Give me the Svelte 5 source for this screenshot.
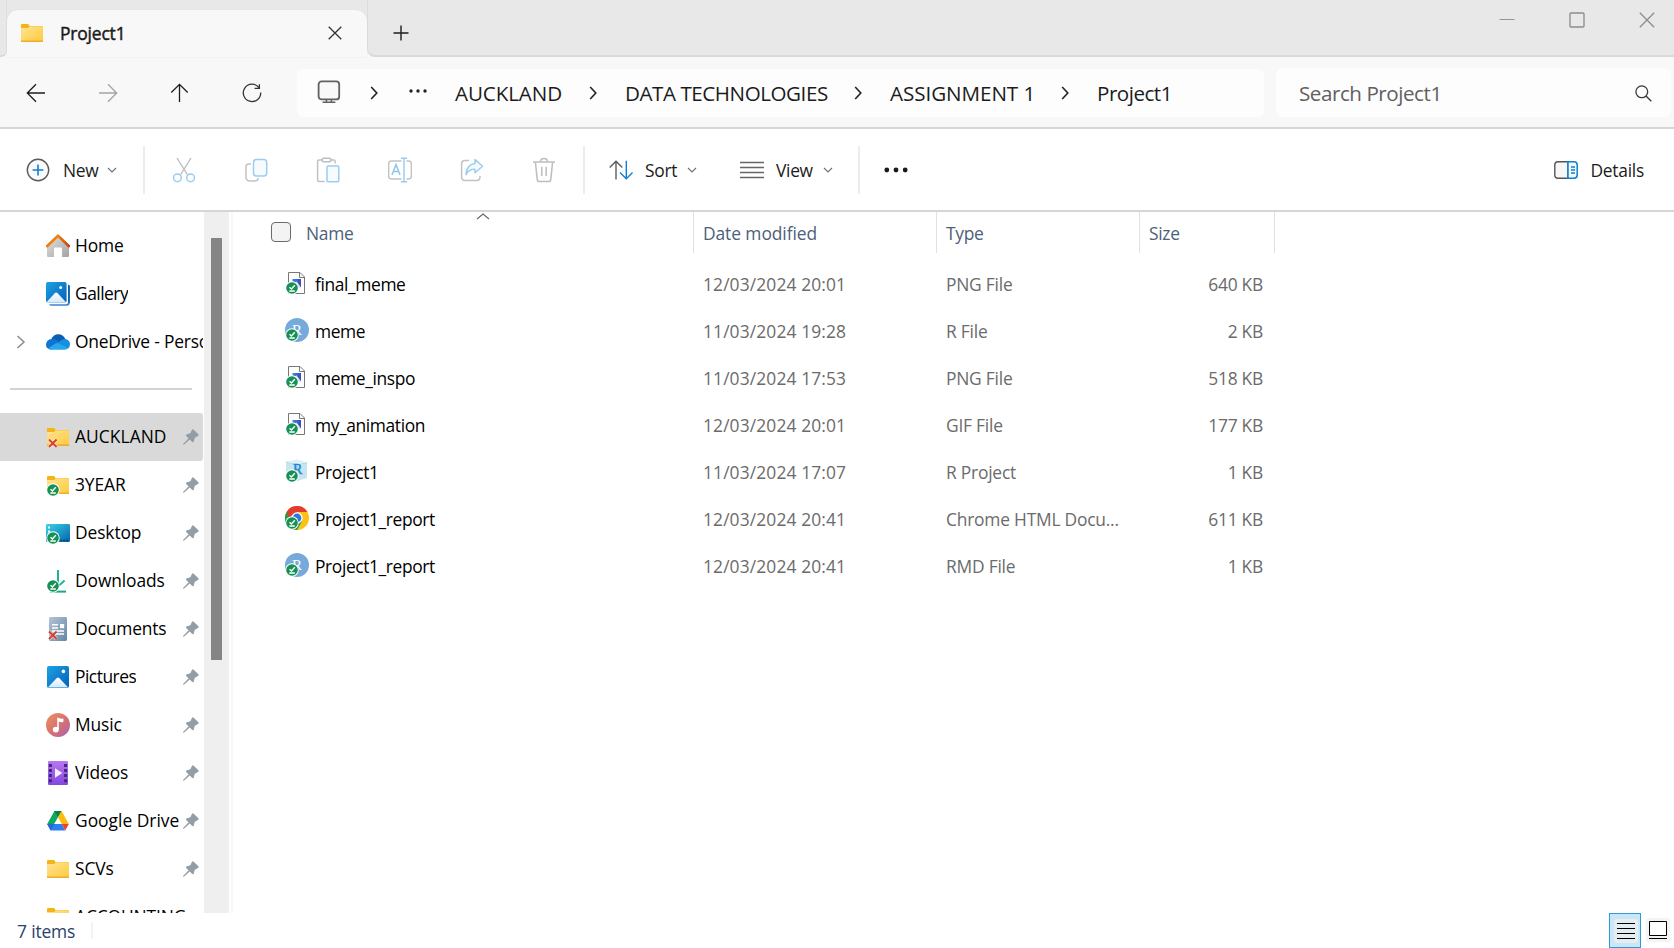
<script>
  const places = [
    { name: 'Home', icon: 'home' },
    { name: 'Gallery', icon: 'gallery', tracking: -0.5 },
    { name: 'OneDrive - Personal', icon: 'onedrive', expandable: true, tracking: -0.2 }
  ];

  const pinned = [
    { name: 'AUCKLAND', icon: 'folder', badge: 'error', selected: true, tracking: 0.06 },
    { name: '3YEAR', icon: 'folder', badge: 'synced' },
    { name: 'Desktop', icon: 'desktop', badge: 'synced' },
    { name: 'Downloads', icon: 'downloads', badge: 'synced' },
    { name: 'Documents', icon: 'documents', badge: 'error', tracking: -0.2 },
    { name: 'Pictures', icon: 'pictures', tracking: -0.5 },
    { name: 'Music', icon: 'music' },
    { name: 'Videos', icon: 'videos' },
    { name: 'Google Drive', icon: 'gdrive', tracking: 0 },
    { name: 'SCVs', icon: 'folder' },
    { name: 'ACCOUNTING', icon: 'folder', unpinned: true }
  ];

  const files = [
    { name: 'final_meme', date: '12/03/2024 20:01', type: 'PNG File', size: '640 KB', icon: 'image' },
    { name: 'meme', date: '11/03/2024 19:28', type: 'R File', size: '2 KB', icon: 'r' },
    { name: 'meme_inspo', date: '11/03/2024 17:53', type: 'PNG File', size: '518 KB', icon: 'image' },
    { name: 'my_animation', date: '12/03/2024 20:01', type: 'GIF File', size: '177 KB', icon: 'image' },
    { name: 'Project1', date: '11/03/2024 17:07', type: 'R Project', size: '1 KB', icon: 'rproj' },
    { name: 'Project1_report', date: '12/03/2024 20:41', type: 'Chrome HTML Docu...', size: '611 KB', icon: 'chrome' },
    { name: 'Project1_report', date: '12/03/2024 20:41', type: 'RMD File', size: '1 KB', icon: 'r' }
  ];
</script>

{#snippet folder()}
  <path d="M1 4.2Q1 3 2.2 3H7.6Q8.4 3 8.8 3.8L9.6 5.2H23V20.4H1Z" fill="#f5b416" />
  <path d="M1 7H8L9.6 5.6H23V20H1Z" fill="url(#gFolder)" />
  <path d="M1 19.6H23V20.8H1Z" fill="#eaa41b" />
{/snippet}

{#snippet badge(kind)}
  {#if kind === 'synced'}
    <circle cx="7" cy="17" r="6.7" fill="#fff" />
    <circle cx="7" cy="17" r="5.8" fill="#169154" />
    <path d="M4.5 16.3L6.4 18L9.8 14.2M4.3 20H9.8" fill="none" stroke="#fff" stroke-width="1.3" />
  {:else if kind === 'error'}
    <path d="M3 14.5L10.6 22M10.6 14.5L3 22" stroke="#fff" stroke-width="3.6" opacity=".6" />
    <path d="M3 14.5L10.6 22M10.6 14.5L3 22" stroke="#d64232" stroke-width="2" />
  {/if}
{/snippet}

{#snippet placeIcon(kind, mark)}
  <svg class="ic24" viewBox="0 0 24 24">
    {#if kind === 'home'}
      <path d="M1 11.5L12 2L23 11.5V21.8Q23 23 21.8 23H16V14.2Q16 13.4 15.2 13.4H8.8Q8 13.4 8 14.2V23H2.2Q1 23 1 21.8Z" fill="url(#gHouse)" />
      <path d="M1 12.2L12 1.7L23 12.2" fill="none" stroke="url(#gRoof)" stroke-width="2.6" stroke-linecap="round" stroke-linejoin="round" />
    {:else if kind === 'gallery'}
      <path d="M3 22.2Q3.6 23.8 5.2 23.8H20.6Q23.8 23.8 23.8 20.6V4.4Q23.8 3 22 2.4V20Q22 22.2 20 22.2Z" fill="#3e84c9" />
      <path d="M22 2.4Q23.8 3 23.8 4.4V20.6L22 21Z" fill="#0c62b3" />
      <rect x="0" y="0" width="20.6" height="20.6" rx="1.8" fill="url(#gPic)" />
      <path d="M.6 20L8.8 11.2Q10.2 9.8 11.6 11.2L19.8 20Q19.4 20.6 18.6 20.6H1.8Q1 20.6 .6 20Z" fill="url(#gSnow)" />
      <circle cx="14.6" cy="5.4" r="1.5" fill="#fff" />
    {:else if kind === 'onedrive'}
      <path d="M5 9.5Q7.4 4.2 12.4 4.2Q17 4.2 19.4 9L12 14Z" fill="#0a5fb4" />
      <path d="M5 19.6Q0 19.3 0 14.6Q.3 9.4 5.6 8.9Q8 8.4 10.5 10L18 14.5Z" fill="#0d74cf" />
      <path d="M10.8 13.6L16 9.8Q17.6 8.6 19.6 9Q23.8 10 24 14.2Q24 17 22 18.4Z" fill="#1490df" />
      <path d="M2 18.4L9.4 13.6Q11 12.6 12.8 13.6L22.2 18.3Q20.8 19.7 18.8 19.7H5.2Q3.2 19.6 2 18.4Z" fill="#28a8ea" />
    {:else if kind === 'folder'}
      {@render folder()}
    {:else if kind === 'desktop'}
      <rect x="0" y="3" width="24" height="18" rx="1.2" fill="url(#gDesk)" />
      <path d="M2 5.5H4V7.5H2ZM2 9.5H4V11.5H2Z" fill="#fff" />
      <path d="M14 19.5H23" stroke="#073f78" stroke-width="1.6" stroke-dasharray="2 1" />
    {:else if kind === 'downloads'}
      <path d="M12 1V17.5M6 11.6L12 17.5L18.6 11.6" fill="none" stroke="#17b59a" stroke-width="2" />
      <path d="M4 22.6H20" stroke="#17a88e" stroke-width="2" />
    {:else if kind === 'documents'}
      <rect x="3" y="0" width="18" height="24" rx="1.4" fill="url(#gDoc)" />
      <path d="M6 7.8H12M6 11H12M6 14H18M9 17H18" stroke="#fff" stroke-width="1.5" />
      <rect x="14" y="7" width="4.2" height="4.2" fill="#fff" />
    {:else if kind === 'pictures'}
      <rect x="1" y="1" width="22" height="22" rx="2" fill="url(#gPic)" />
      <path d="M2 22.2L10.6 13.2Q12 11.8 13.4 13.2L22 22.2Q21.6 22.6 20.8 22.6H3.2Q2.4 22.6 2 22.2Z" fill="url(#gSnow)" />
      <circle cx="17.4" cy="6.4" r="1.8" fill="#fff" />
    {:else if kind === 'music'}
      <circle cx="12" cy="12" r="12" fill="url(#gMusic)" />
      <ellipse cx="9.8" cy="16.6" rx="3" ry="2.9" fill="#fff" />
      <path d="M11.2 16.5V4.6Q14 6.2 17.4 5.6V9Q15 9.4 12.8 8.6V16.5Z" fill="#fff" />
    {:else if kind === 'videos'}
      <rect x="2" y="0" width="20" height="24" rx="1.2" fill="url(#gVideo)" />
      <path d="M4.4 2.9V22M19.6 2.9V22" stroke="#43257a" stroke-width="3" stroke-dasharray="3 2.1" />
      <path d="M9 7.2L16.4 12L9 16.8Z" fill="#f6f0ff" />
    {:else if kind === 'gdrive'}
      <path d="M8.4 2H15.6L12 8.2L4.8 20.8L1.2 15Z" fill="#0da960" />
      <path d="M8.4 2H15.6L12 8.2Z" fill="#118043" />
      <path d="M15.6 2L22.8 15H15.8L12 8.2Z" fill="#fcbc0b" />
      <path d="M8.3 15H15.8L19.3 21.6H4.8L1.2 15Z" fill="#2d7ff0" />
      <path d="M1.2 15H8.3L4.6 21.4Z" fill="#2869d8" />
      <path d="M15.8 15H22.8L19.3 21.6Z" fill="#ea4335" />
    {/if}
    {@render badge(mark)}
  </svg>
{/snippet}

{#snippet fileIcon(kind)}
  <svg class="ic24" viewBox="0 0 24 24">
    {#if kind === 'image'}
      <path d="M3.5 1.5H15L19.5 6V22.5H3.5Z" fill="#fdfdfd" stroke="#777" />
      <path d="M14.5 1.5V6.5H19.5" fill="none" stroke="#777" />
      <path d="M7.5 8H16V16.5L11.5 10.5L7.5 13Z" fill="url(#gThumb)" />
      <path d="M8 13L11.5 10.8L15.6 16.5H12Z" fill="#b9dcf8" />
    {:else if kind === 'r'}
      <circle cx="12" cy="12" r="12" fill="#75aadb" />
      <text x="7" y="17" font-family="Liberation Serif, serif" font-size="15" fill="#fff">R</text>
    {:else if kind === 'rproj'}
      <path d="M1 3L12 .6L22 3.6V19L12 22L1 19Z" fill="#c5e5ef" />
      <path d="M1 3L12 5.4L22 3.6M12 5.4V22" fill="none" stroke="#9fcfe0" />
      <path d="M1 3L12 .6L22 3.6L12 5.4Z" fill="#e0f2f7" />
      <text x="8" y="14.8" font-family="Liberation Serif, serif" font-size="14" fill="#1b83d8" stroke="#1b83d8" stroke-width=".4">R</text>
    {:else}
      <circle cx="12" cy="12" r="12" fill="#fbc116" />
      <path d="M12 12L1.6 6A12 12 0 0 0 12 24L17.2 15Z" fill="#279847" />
      <path d="M1.6 6A12 12 0 0 1 22.4 6H12L6.8 15Z" fill="#e33b2e" />
      <circle cx="12" cy="12" r="5.7" fill="#fff" />
      <circle cx="12" cy="12" r="4.4" fill="#2a78e4" />
    {/if}
    {@render badge('synced')}
  </svg>
{/snippet}

{#snippet crumbArrow()}
  <svg width="8" height="14" viewBox="0 0 8 14"><path d="M1.2 1L6.8 7L1.2 13" fill="none" stroke="#222" stroke-width="1.6" /></svg>
{/snippet}

{#snippet caret()}
  <svg class="caret" width="10" height="6" viewBox="0 0 10 6"><path d="M1 1L5 5L9 1" fill="none" stroke="#707070" stroke-width="1.1" /></svg>
{/snippet}

<svg class="defs" width="0" height="0">
  <defs>
    <linearGradient id="gFolder" x1="0" y1="0" x2="1" y2="1"><stop offset="0" stop-color="#ffe394" /><stop offset="1" stop-color="#ffcb3d" /></linearGradient>
    <linearGradient id="gHouse" x1="0" y1="0" x2="1" y2="1"><stop offset="0" stop-color="#e2e2e2" /><stop offset="1" stop-color="#a3a3a3" /></linearGradient>
    <linearGradient id="gRoof"><stop offset="0" stop-color="#ee7d10" /><stop offset=".5" stop-color="#f0820d" /><stop offset="1" stop-color="#cc3f0c" /></linearGradient>
    <linearGradient id="gPic" x1="0" y1="0" x2="1" y2="1"><stop offset="0" stop-color="#1da1e6" /><stop offset="1" stop-color="#0560b6" /></linearGradient>
    <linearGradient id="gSnow" x1="0" y1="0" x2="0" y2="1"><stop offset="0" stop-color="#fff" /><stop offset="1" stop-color="#d2e9fb" /></linearGradient>
    <linearGradient id="gDesk" x1="0" y1="0" x2="1" y2="1"><stop offset="0" stop-color="#35d5e8" /><stop offset="1" stop-color="#0762ad" /></linearGradient>
    <linearGradient id="gDoc" x1="0" y1="0" x2="1" y2="1"><stop offset="0" stop-color="#b3c5d7" /><stop offset="1" stop-color="#6585a5" /></linearGradient>
    <linearGradient id="gMusic" x1="0" y1="0" x2="1" y2="1"><stop offset="0" stop-color="#f0915c" /><stop offset=".55" stop-color="#d66f72" /><stop offset="1" stop-color="#a763b8" /></linearGradient>
    <linearGradient id="gVideo" x1="0" y1="0" x2="0" y2="1"><stop offset="0" stop-color="#b678ee" /><stop offset="1" stop-color="#8347dd" /></linearGradient>
    <linearGradient id="gThumb"><stop offset="0" stop-color="#3d8be0" /><stop offset="1" stop-color="#4643b5" /></linearGradient>
  </defs>
</svg>

<div class="window">
  <header class="tabs">
    <div class="lead"></div>
    <div class="tab">
      <svg class="ic24" viewBox="0 0 24 24">{@render folder()}</svg>
      <span class="tab-title">Project1</span>
      <svg class="tab-close" width="14" height="14" viewBox="0 0 14 14"><path d="M.7.7L13.3 13.3M13.3.7L.7 13.3" stroke="#333" stroke-width="1.3" /></svg>
    </div>
    <div class="strip">
      <svg class="plus" width="16" height="16" viewBox="0 0 16 16"><path d="M8 .5V15.5M.5 8H15.5" stroke="#1c1c1c" stroke-width="1.4" /></svg>
      <div class="controls">
        <svg width="16" height="16" viewBox="0 0 16 16"><path d="M.5 7.5H15.5" stroke="#969696" /></svg>
        <svg width="16" height="16" viewBox="0 0 16 16"><rect x="1" y="1" width="14" height="14" rx="1" fill="none" stroke="#8c8c8c" stroke-width="1.3" /></svg>
        <svg width="16" height="16" viewBox="0 0 16 16"><path d="M.8.8L15.2 15.2M15.2.8L.8 15.2" stroke="#8c8c8c" stroke-width="1.3" /></svg>
      </div>
    </div>
  </header>

  <nav class="navbar">
    <div class="history">
      <svg width="20" height="20" viewBox="0 0 20 20"><path d="M19 10H1.6M10 1.3L1.3 10L10 18.7" fill="none" stroke="#1c1c1c" stroke-width="1.3" /></svg>
      <svg width="20" height="20" viewBox="0 0 20 20"><path d="M1 10H18.4M10 1.3L18.7 10L10 18.7" fill="none" stroke="#a3a3a3" stroke-width="1.3" /></svg>
      <svg width="20" height="20" viewBox="0 0 20 20"><path d="M9.5 19V1.6M1.3 9.5L9.5 1.3L17.7 9.5" fill="none" stroke="#1c1c1c" stroke-width="1.3" /></svg>
      <svg width="20" height="20" viewBox="0 0 20 20"><path d="M16.8 4.4A8.7 8.7 0 1 0 18.7 9.5M17.4 1.2V5.4H12.6" fill="none" stroke="#333" stroke-width="1.3" /></svg>
    </div>
    <div class="address">
      <svg width="24" height="24" viewBox="0 0 24 24"><rect x="1.6" y="1.4" width="20.6" height="18" rx="3" fill="#f8f8f8" stroke="#616161" stroke-width="1.8" /><path d="M9.4 19.5V22M14.4 19.5V22M5.5 22.3H18.4" stroke="#616161" stroke-width="1.5" /></svg>
      {@render crumbArrow()}
      <svg class="more" width="18" height="4" viewBox="0 0 18 4"><circle cx="2" cy="2" r="1.7" fill="#222" /><circle cx="9" cy="2" r="1.7" fill="#222" /><circle cx="16" cy="2" r="1.7" fill="#222" /></svg>
      <span class="c1">AUCKLAND</span>
      {@render crumbArrow()}
      <span class="c2">DATA TECHNOLOGIES</span>
      {@render crumbArrow()}
      <span class="c3">ASSIGNMENT 1</span>
      {@render crumbArrow()}
      <span>Project1</span>
    </div>
    <div class="search">
      <span>Search Project1</span>
      <svg width="17" height="17" viewBox="0 0 17 17"><circle cx="6.8" cy="6.8" r="5.9" fill="none" stroke="#3a3a3a" stroke-width="1.3" /><path d="M11 11L16.3 16.3" stroke="#3a3a3a" stroke-width="1.4" /></svg>
    </div>
  </nav>

  <div class="toolbar">
    <div class="cmd new">
      <svg width="24" height="24" viewBox="0 0 24 24"><circle cx="12" cy="12" r="10.7" fill="#fafafa" stroke="#5a5a5a" stroke-width="1.4" /><path d="M12 6.6V17.4M6.6 12H17.4" stroke="#0f7fd6" stroke-width="1.6" /></svg>
      <span>New</span>
      {@render caret()}
    </div>
    <div class="sep"></div>
    <div class="actions">
      <svg viewBox="0 0 24 26"><path d="M5 1L15.6 18M19 1L8.4 18" stroke="#bdbdbd" stroke-width="1.4" /><circle cx="5.4" cy="20.8" r="3.9" fill="none" stroke="#9bcdf1" stroke-width="1.5" /><circle cx="18.6" cy="20.8" r="3.9" fill="none" stroke="#9bcdf1" stroke-width="1.5" /></svg>
      <svg viewBox="0 0 24 26"><path d="M7 7H5Q2 7 2 10V20Q2 24 6 24H11Q14 24 14 21" fill="none" stroke="#c2c2c2" stroke-width="1.5" /><rect x="9.5" y="2.4" width="13.2" height="16.6" rx="3" fill="#f7fbff" stroke="#9bcdf1" stroke-width="1.5" /></svg>
      <svg viewBox="0 0 24 26"><path d="M6 3H3Q1.6 3 1.6 4.4V23Q1.6 24.6 3 24.6H8.6M15 3H18Q19.2 3 19.2 4.4V6.4" fill="none" stroke="#c2c2c2" stroke-width="1.5" /><rect x="6" y="1.2" width="9" height="3.6" rx="1.8" fill="#fff" stroke="#bdbdbd" stroke-width="1.4" /><rect x="11" y="9" width="11.8" height="15.8" rx="1.2" fill="#f7fbff" stroke="#9bcdf1" stroke-width="1.5" /></svg>
      <svg viewBox="0 0 24 26"><path d="M13.6 4H3.6Q.6 4 .6 7V19Q.6 22 3.6 22H13.6M18.5 4H20.4Q23.4 4 23.4 7V19Q23.4 22 20.4 22H18.5" fill="none" stroke="#c2c2c2" stroke-width="1.5" /><path d="M12.8 1.2H19.2M16 1.2V24.8M12.8 24.8H19.2" fill="none" stroke="#9bcdf1" stroke-width="1.5" /><path d="M4 18L8 7.5L12 18M5.3 14.6H10.7" fill="none" stroke="#8dc4ed" stroke-width="1.5" /></svg>
      <svg viewBox="0 0 24 26"><path d="M9 3.4H5Q1.6 3.4 1.6 6.8V20Q1.6 23.4 5 23.4H16.6Q20 23.4 20 20V19" fill="none" stroke="#c2c2c2" stroke-width="1.5" /><path d="M15 2.6L22.6 9.2L15 15.8V12.2Q9 11.6 6 17.6Q6.4 7.4 15 6.4Z" fill="#f7fbff" stroke="#9bcdf1" stroke-width="1.5" stroke-linejoin="round" /></svg>
      <svg viewBox="0 0 24 26"><path d="M1 5H23M8.4 4.8Q8.6 1.4 12 1.4Q15.4 1.4 15.6 4.8M3.4 5L5.2 22.4Q5.4 24.6 7.6 24.6H16.4Q18.6 24.6 18.8 22.4L20.6 5M9.8 10V19M14.2 10V19" fill="none" stroke="#bdbdbd" stroke-width="1.5" /></svg>
    </div>
    <div class="sep second"></div>
    <div class="cmd sort">
      <svg width="24" height="20" viewBox="0 0 24 20"><path d="M7 19.5V1.5M.7 7.5L7 1.2L13.3 7.5" fill="none" stroke="#5c5c5c" stroke-width="1.4" /><path d="M17.3.8V18.5M11 12.5L17.3 18.8L23.6 12.5" fill="none" stroke="#0f7fd6" stroke-width="1.4" /></svg>
      <span>Sort</span>
      {@render caret()}
    </div>
    <div class="cmd view">
      <svg width="24" height="18" viewBox="0 0 24 18"><path d="M0 1.5H24M0 6.5H24M0 11.5H24M0 16.5H24" stroke="#666" stroke-width="1.5" /></svg>
      <span>View</span>
      {@render caret()}
    </div>
    <div class="sep third"></div>
    <svg class="dots" width="24" height="6" viewBox="0 0 24 6"><circle cx="2.8" cy="3" r="2.4" fill="#1a1a1a" /><circle cx="12" cy="3" r="2.4" fill="#1a1a1a" /><circle cx="21.2" cy="3" r="2.4" fill="#1a1a1a" /></svg>
    <div class="cmd details">
      <svg width="24" height="18" viewBox="0 0 24 18"><path d="M14 .8H4Q.8.8.8 4V14Q.8 17.2 4 17.2H14Z" fill="#f7f7f7" stroke="#555" stroke-width="1.4" /><path d="M14 .8H20Q23.2.8 23.2 4V14Q23.2 17.2 20 17.2H14Z" fill="#f2faff" stroke="#0f7fd6" stroke-width="1.5" /><path d="M17 6H21M17 9H21M17 12H21" stroke="#0f7fd6" stroke-width="1.3" /></svg>
      <span>Details</span>
    </div>
  </div>

  <main class="body">
    <aside class="tree">
      {#each places as p}
        <div class="node">
          <span class="expander">
            {#if p.expandable}
              <svg width="9" height="14" viewBox="0 0 9 14"><path d="M.5 1L7 7L.5 13" fill="none" stroke="#8a8a8a" stroke-width="1.5" /></svg>
            {/if}
          </span>
          {@render placeIcon(p.icon)}
          <span class="label" style:letter-spacing="{p.tracking ?? -0.1}px">{p.name}</span>
        </div>
      {/each}
      <div class="rule"></div>
      {#each pinned as p}
        <div class="node" class:selected={p.selected}>
          <span class="expander"></span>
          {@render placeIcon(p.icon, p.badge)}
          <span class="label" style:letter-spacing="{p.tracking ?? -0.1}px">{p.name}</span>
          {#if !p.unpinned}
            <svg class="pin" width="16" height="16" viewBox="0 0 16 16"><path d="M9.2.4Q10 0 10.7.7L15.4 5.3Q16 6 15.3 6.7L11.8 8.7L10.8 12.6Q10.2 13.6 9.3 12.9L6.7 10.4L1.2 15.6L0 15.9L.4 14.8L5.6 9.3L3.2 6.9Q2.4 6 3.4 5.4L7.3 4.3Z" fill="#929da5" /></svg>
          {/if}
        </div>
      {/each}
    </aside>
    <div class="scroll"><div class="thumb"></div></div>
    <section class="list">
      <div class="row head">
        <div class="cell name">
          <span class="check"></span>
          <span>Name</span>
          <svg class="asc" width="14" height="7" viewBox="0 0 14 7"><path d="M1 6L7 1L13 6" fill="none" stroke="#666" stroke-width="1.1" /></svg>
        </div>
        <div class="cell modified">Date modified</div>
        <div class="cell">Type</div>
        <div class="cell">Size</div>
      </div>
      {#each files as f}
        <div class="row">
          <div class="cell name">{@render fileIcon(f.icon)}<span>{f.name}</span></div>
          <div class="cell date">{f.date}</div>
          <div class="cell kind">{f.type}</div>
          <div class="cell size">{f.size}</div>
        </div>
      {/each}
    </section>
  </main>

  <footer class="status">
    <span class="count">7 items</span>
    <div class="tick"></div>
    <div class="modes">
      <div class="mode on"><svg width="24" height="24" viewBox="0 0 24 24"><rect width="24" height="24" rx="3" fill="#e4edf1" /><path d="M3 4.5H21M3 9.5H21M3 14.5H21M3 19.5H21" stroke="#000" /></svg></div>
      <div class="mode"><svg width="24" height="24" viewBox="0 0 24 24"><rect width="24" height="24" rx="3" fill="#f4f4f4" /><path d="M3.5 3.5H20.5V17.5H3.5ZM3 20.5H21" fill="#fff" stroke="#000" /></svg></div>
    </div>
  </footer>
</div>

<style>
  :global(body) { margin: 0; overflow: hidden; }
  .defs { display: block; height: 0; }
  .window {
    width: 1674px; height: 948px; display: flex; flex-direction: column; overflow: hidden;
    background: #fff; color: #1b1b1b; font: 17.4px/24px "Open Sans", "Noto Sans", sans-serif; letter-spacing: -0.3px;
    white-space: nowrap;
  }
  svg { display: block; flex: none; }
  .ic24 { width: 24px; height: 24px; }

  .tabs { height: 57px; display: flex; background: #f8f8f8; flex: none; }
  .lead { width: 7px; box-sizing: border-box; background: #e8e8e8; border-bottom: 2px solid #d9d9d9; border-right: 1px solid #dedede; border-radius: 0 0 6px 0; }
  .tab { width: 360px; display: flex; align-items: center; padding: 10px 24px 0 13px; box-sizing: border-box; background: linear-gradient(#e8e8e8 24px, #f8f8f8 24px); position: relative; z-index: 0; }
  .tab::before { content: ""; position: absolute; z-index: -1; inset: 10px 0 0; background: #f8f8f8; border-radius: 11px 11px 0 0; box-shadow: 0 0 1px #ccc; }
  .tab .ic24 { margin-top: -2px; }
  .tab-title { margin: -1px 0 0 16px; -webkit-text-stroke: .45px #1b1b1b; letter-spacing: -0.15px; }
  .tab-close { margin: -2px 1px 0 auto; }
  .strip { flex: 1; display: flex; justify-content: space-between; background: #e8e8e8; border-bottom: 2px solid #d9d9d9; border-left: 1px solid #dcdcdc; border-radius: 0 0 0 8px; box-sizing: border-box; }
  .plus { margin: 25px 0 0 25px; }
  .controls { display: flex; gap: 54px; padding: 12px 19px 0 0; }

  .navbar { height: 70px; flex: none; display: flex; background: #f8f8f8; border-bottom: 2px solid #d6d6d6; }
  .history { width: 297px; box-sizing: border-box; padding: 26px 0 0 26px; display: flex; gap: 52px; }
  .address { width: 967px; height: 48px; margin-top: 12px; box-sizing: border-box; padding: 0 0 0 20px; border-radius: 7px; background: #fdfdfd; display: grid; grid-template-columns: 53px 39px 46px 134px 36px 229px 36px 171px 36px auto; align-items: center; font-size: 20.6px; letter-spacing: -0.5px; }
  .c1 { letter-spacing: -0.1px; }
  .c2 { letter-spacing: -0.45px; }
  .c3 { letter-spacing: -0.05px; }
  .more { margin-top: -4px; }
  .address > svg:first-child { margin-top: -2px; }
  .search { width: 395px; height: 49px; margin: 11px 0 0 12px; box-sizing: border-box; padding: 0 19px 0 23px; border-radius: 7px; background: #fdfdfd; display: flex; align-items: center; justify-content: space-between; font-size: 20.6px; letter-spacing: -0.45px; color: #606060; }
  .search svg { margin-top: 2px; }

  .toolbar { height: 81px; flex: none; display: flex; align-items: center; border-bottom: 2px solid #d6d6d6; }
  .cmd { display: flex; align-items: center; }
  .cmd span { margin-top: 1px; }
  .caret { margin-left: -2px; margin-top: 1px; }
  .new { width: 92px; padding-left: 26px; gap: 13px; }
  .new .caret { margin-left: -4px; }
  .sep { width: 2px; height: 48px; margin-left: 25px; background: #ececec; }
  .actions { display: flex; gap: 48px; margin-left: 27px; }
  .actions svg { width: 24px; height: 26px; }
  .second { margin-left: 27px; }
  .sort { width: 87px; gap: 12px; margin-left: 24px; }
  .view { width: 92px; gap: 12px; margin-left: 44px; }
  .third { margin-left: 26px; }
  .dots { margin-left: 24px; }
  .details { gap: 12px; margin: 0 30px 0 auto; letter-spacing: -0.25px; }

  .body { flex: 1; min-height: 0; display: flex; }
  .tree { width: 204px; padding-top: 10px; box-sizing: border-box; overflow: hidden; color: #000; }
  .node { width: 203px; height: 48px; display: flex; align-items: center; box-sizing: border-box; padding-right: 4px; overflow: hidden; }
  .node.selected { background: #d9d9d9; border-radius: 0 3px 3px 0; }
  .expander { width: 29px; padding-left: 17px; flex: none; }
  .label { margin-left: 5px; padding-bottom: 2px; overflow: hidden; flex: none; max-width: 128px; }
  .pin { margin-left: auto; }
  .rule { width: 182px; height: 2px; margin: 22px 0 23px 10px; background: #d3d3d3; }
  .scroll { width: 25px; padding: 26px 0 0 7px; box-sizing: border-box; background: #efefef; flex: none; }
  .thumb { width: 11px; height: 422px; background: #858585; }
  .list { flex: 1; margin-left: 2px; border-left: 2px solid #f8f8f8; }
  .row { display: grid; grid-template-columns: 461px 243px 203px 135px; height: 47px; align-items: center; color: #6b6b6b; }
  .head { height: 41px; margin-bottom: 8px; color: #4c607a; }
  .head .cell { height: 41px; box-sizing: border-box; border-right: 1px solid #e2e2e2; padding-top: 9px; }
  .head .cell.name { display: flex; padding-left: 38px; position: relative; }
  .head .name span:nth-child(2) { margin-left: 15px; }
  .check { width: 18px; height: 18px; margin-top: 1px; border: 1px solid #6a6a6a; border-radius: 4px; background: #f3f3f3; }
  .asc { position: absolute; left: 243px; top: 1px; }
  .cell { padding-left: 9px; }
  .modified { letter-spacing: -0.08px; }
  .row:not(.head) .cell { padding-bottom: 2px; }
  .date { letter-spacing: 0.12px; }
  .kind { letter-spacing: -0.22px; }
  .row:not(.head) .name { display: flex; align-items: center; padding-left: 52px; color: #000; letter-spacing: -0.38px; }
  .name .ic24 { margin-top: -1px; }
  .name .ic24 + span { margin-left: 6px; }
  .size { text-align: right; padding-right: 12px; letter-spacing: -0.25px; }

  .status { height: 35px; flex: none; display: flex; color: #27416b; }
  .count { width: 74px; padding: 6px 0 0 17px; letter-spacing: -0.15px; }
  .tick { width: 2px; height: 17px; margin-top: 9px; background: #f3f3f3; }
  .modes { margin-left: auto; display: flex; }
  .mode { width: 32px; height: 35px; box-sizing: border-box; padding: 5px 0 0 5px; }
  .mode.on { border: 1px solid #2d9bdb; background: #cbe6f6; padding: 5px 0 0 4px; }
  .mode:last-child { width: 33px; }
</style>
